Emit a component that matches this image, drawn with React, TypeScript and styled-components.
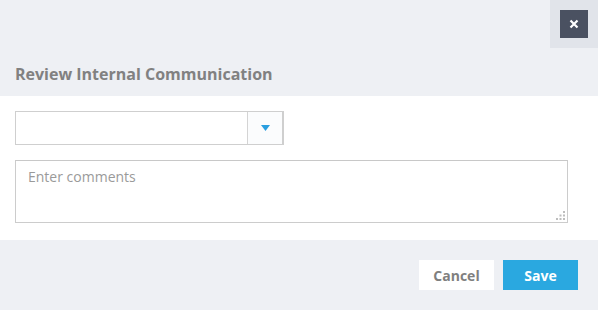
import styled, { createGlobalStyle } from 'styled-components'

const GlobalStyle = createGlobalStyle`
  html, body {
    margin: 0;
    padding: 0;
    background: #eef0f4;
    font-family: 'Open Sans', 'Liberation Sans', sans-serif;
  }
  * { box-sizing: border-box; }
`

const Modal = styled.div`
  width: 598px;
  height: 310px;
  background: #eef0f4;
  display: flex;
  flex-direction: column;
`

const Header = styled.div`
  height: 96px;
  display: flex;
  flex-direction: column;
`

const CloseRow = styled.div`
  display: flex;
  justify-content: flex-end;
`

const CloseArea = styled.div`
  width: 48px;
  height: 48px;
  background: #e1e4ea;
  display: flex;
  align-items: center;
  justify-content: center;
`

const CloseButton = styled.button`
  width: 28px;
  height: 28px;
  border: none;
  padding: 0;
  background: #4a5161;
  color: #fff;
  display: flex;
  align-items: center;
  justify-content: center;
  cursor: pointer;
`

const Title = styled.h2`
  margin: 0;
  padding: 16px 15px 0;
  font-size: 16px;
  font-weight: 700;
  color: #818181;
  line-height: 21px;
`

const Body = styled.div`
  background: #fff;
  padding: 15px 15px 17px;
  display: flex;
  flex-direction: column;
  gap: 15px;
`

const Select = styled.div`
  width: 269px;
  height: 34px;
  border: 1px solid #cfcfcf;
  border-right-width: 2px;
  display: flex;
`

const SelectValue = styled.div`
  flex: 1;
`

const SelectArrow = styled.div`
  width: 35px;
  border-left: 1px solid #d4d4d4;
  background: #fbfcfd;
  display: flex;
  align-items: center;
  justify-content: center;
`

const CommentsWrap = styled.div`
  position: relative;
  width: 553px;
  height: 63px;
`

const Comments = styled.textarea`
  width: 100%;
  height: 100%;
  display: block;
  border: 1px solid #cccccc;
  border-top-color: #c8c8c8;
  padding: 6px 12px;
  font-family: 'Open Sans', 'Liberation Sans', sans-serif;
  font-size: 14px;
  color: #555;
  resize: none;
  outline: none;
  &::placeholder {
    color: #9a9a9a;
  }
`

const Grip = styled.svg`
  position: absolute;
  right: 3px;
  bottom: 3px;
  pointer-events: none;
`

const Footer = styled.div`
  flex: 1;
  display: flex;
  justify-content: flex-end;
  align-items: flex-start;
  gap: 9px;
  padding: 20px 20px 0;
`

const ActionButton = styled.button<{ $primary?: boolean }>`
  width: 75px;
  height: 30px;
  border: none;
  font-family: 'Open Sans', 'Liberation Sans', sans-serif;
  font-size: 14px;
  font-weight: 700;
  background: ${(p) => (p.$primary ? '#2aa8e0' : '#ffffff')};
  color: ${(p) => (p.$primary ? '#ffffff' : '#7f7f7f')};
  cursor: pointer;
`

export default function App() {
  return (
    <>
      <GlobalStyle />
      <Modal>
        <Header>
          <CloseRow>
            <CloseArea>
              <CloseButton aria-label="Close">
                <svg width="10" height="10" viewBox="0 0 10 10">
                  <path d="M1.5 1.5 L8.5 8.5 M8.5 1.5 L1.5 8.5" stroke="#fff" strokeWidth="2.2" />
                </svg>
              </CloseButton>
            </CloseArea>
          </CloseRow>
          <Title>Review Internal Communication</Title>
        </Header>
        <Body>
          <Select>
            <SelectValue />
            <SelectArrow>
              <svg width="9" height="6" viewBox="0 0 9 6">
                <path d="M0 0 H9 L4.5 6 Z" fill="#2a9fe0" />
              </svg>
            </SelectArrow>
          </Select>
          <CommentsWrap>
            <Comments placeholder="Enter comments" />
            <Grip width="9" height="9" viewBox="0 0 9 9">
              <g fill="#bdbdbd">
                <rect x="7" y="0" width="2" height="2" />
                <rect x="3.5" y="3.5" width="2" height="2" />
                <rect x="7" y="3.5" width="2" height="2" />
                <rect x="0" y="7" width="2" height="2" />
                <rect x="3.5" y="7" width="2" height="2" />
                <rect x="7" y="7" width="2" height="2" />
              </g>
            </Grip>
          </CommentsWrap>
        </Body>
        <Footer>
          <ActionButton>Cancel</ActionButton>
          <ActionButton $primary>Save</ActionButton>
        </Footer>
      </Modal>
    </>
  )
}
